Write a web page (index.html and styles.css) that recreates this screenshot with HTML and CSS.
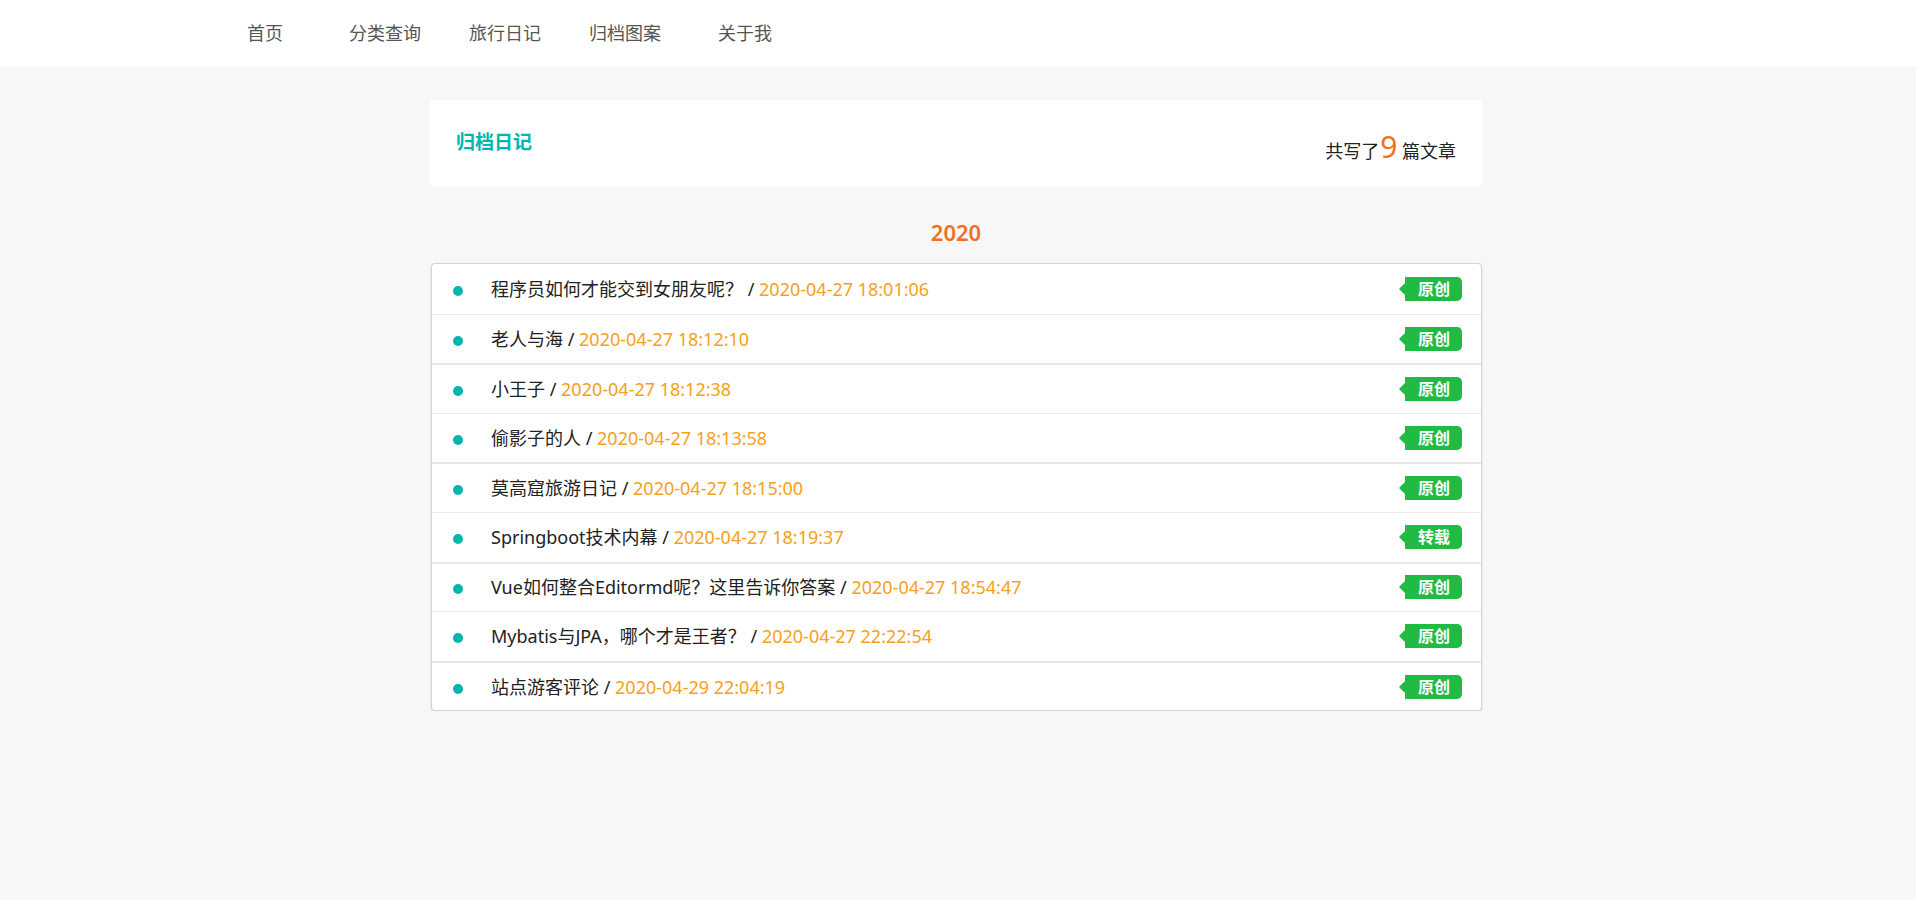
FILE: index.html
```html
<!DOCTYPE html>
<html lang="zh-CN">
<head>
<meta charset="utf-8">
<title>归档日记</title>
<link rel="stylesheet" href="styles.css">
</head>
<body>
<nav class="topnav">
  <a class="nav-item">首页</a>
  <a class="nav-item">分类查询</a>
  <a class="nav-item">旅行日记</a>
  <a class="nav-item">归档图案</a>
  <a class="nav-item">关于我</a>
</nav>
<main class="main">
  <section class="summary">
    <h2 class="summary-title">归档日记</h2>
    <div class="summary-count">共写了<span class="count-num">9</span> 篇文章</div>
  </section>
  <h3 class="year">2020</h3>
  <ul class="archive">
    <li class="archive-item"><span class="dot"></span><span class="item-title">程序员如何才能交到女朋友呢？ / <span class="item-date">2020-04-27 18:01:06</span></span><span class="tag">原创</span></li>
    <li class="archive-item"><span class="dot"></span><span class="item-title">老人与海 / <span class="item-date">2020-04-27 18:12:10</span></span><span class="tag">原创</span></li>
    <li class="archive-item"><span class="dot"></span><span class="item-title">小王子 / <span class="item-date">2020-04-27 18:12:38</span></span><span class="tag">原创</span></li>
    <li class="archive-item"><span class="dot"></span><span class="item-title">偷影子的人 / <span class="item-date">2020-04-27 18:13:58</span></span><span class="tag">原创</span></li>
    <li class="archive-item"><span class="dot"></span><span class="item-title">莫高窟旅游日记 / <span class="item-date">2020-04-27 18:15:00</span></span><span class="tag">原创</span></li>
    <li class="archive-item"><span class="dot"></span><span class="item-title">Springboot技术内幕 / <span class="item-date">2020-04-27 18:19:37</span></span><span class="tag">转载</span></li>
    <li class="archive-item"><span class="dot"></span><span class="item-title">Vue如何整合Editormd呢？这里告诉你答案 / <span class="item-date">2020-04-27 18:54:47</span></span><span class="tag">原创</span></li>
    <li class="archive-item"><span class="dot"></span><span class="item-title">Mybatis与JPA，哪个才是王者？ / <span class="item-date">2020-04-27 22:22:54</span></span><span class="tag">原创</span></li>
    <li class="archive-item"><span class="dot"></span><span class="item-title">站点游客评论 / <span class="item-date">2020-04-29 22:04:19</span></span><span class="tag">原创</span></li>
  </ul>
</main>
</body>
</html>
```

FILE: styles.css
```css
* { box-sizing: border-box; }
html, body { margin: 0; padding: 0; }
body {
  background: #f7f7f7;
  font-family: "Noto Sans", "Noto Sans CJK SC", sans-serif;
  color: #333;
}
.topnav {
  height: 66px;
  background: #fff;
  display: flex;
  align-items: center;
  padding-left: 205px;
}
.nav-item {
  width: 120px;
  text-align: center;
  font-size: 18px;
  color: #555;
  line-height: 1;
  text-decoration: none;
}
.main {
  width: 1052px;
  margin: 34px 0 0 430px;
}
.summary {
  height: 86px;
  background: #fff;
  border-radius: 4px;
  display: flex;
  align-items: center;
  justify-content: space-between;
  padding: 0 26px;
}
.summary-title {
  margin: 0 0 2px;
  font-size: 19px;
  font-weight: 700;
  color: #00b5ad;
  line-height: 1;
}
.summary-count {
  margin-top: 8px;
  font-size: 18px;
  color: #222;
  line-height: 1;
}
.count-num {
  font-size: 30px;
  color: #f2711c;
  margin-left: 1px;
}
.year {
  margin: 0;
  height: 77px;
  display: flex;
  align-items: center;
  justify-content: center;
  padding-top: 14px;
  font-size: 22px;
  font-weight: 600;
  color: #f2711c;
}
.archive {
  list-style: none;
  margin: 0 0 0 1px;
  padding: 0;
  background: #fff;
  border: 1px solid #d4d4d5;
  border-radius: 4px;
  box-shadow: 0 1px 2px rgba(34, 36, 38, 0.15);
}
.archive-item {
  height: 49.6px;
  display: flex;
  align-items: center;
  padding: 0 19px 0 21px;
  border-top: 1px solid #e8e8e8;
}
.archive-item:first-child { border-top: none; }
.archive-item:nth-child(odd):not(:first-child) { border-top: 2px solid #e8e8e8; }
.dot {
  width: 10px;
  height: 10px;
  border-radius: 50%;
  background: #00b5ad;
  margin-top: 4px;
  flex: none;
}
.item-title {
  margin-left: 28px;
  flex: 1;
  font-size: 18px;
  color: #222;
  line-height: 1;
  white-space: nowrap;
}
.item-date { color: #f7a01b; }
.tag {
  position: relative;
  background: #21ba45;
  color: #fff;
  font-size: 16px;
  font-weight: 700;
  line-height: 1;
  height: 24px;
  display: inline-flex;
  align-items: center;
  padding: 0 12px 0 13px;
  border-radius: 0 5px 5px 0;
  margin-left: 8px;
}
.tag::before {
  content: "";
  position: absolute;
  left: -4px;
  top: 50%;
  width: 10px;
  height: 10px;
  margin-top: -5px;
  background: #21ba45;
  transform: rotate(45deg);
  border-radius: 1px;
}
```
